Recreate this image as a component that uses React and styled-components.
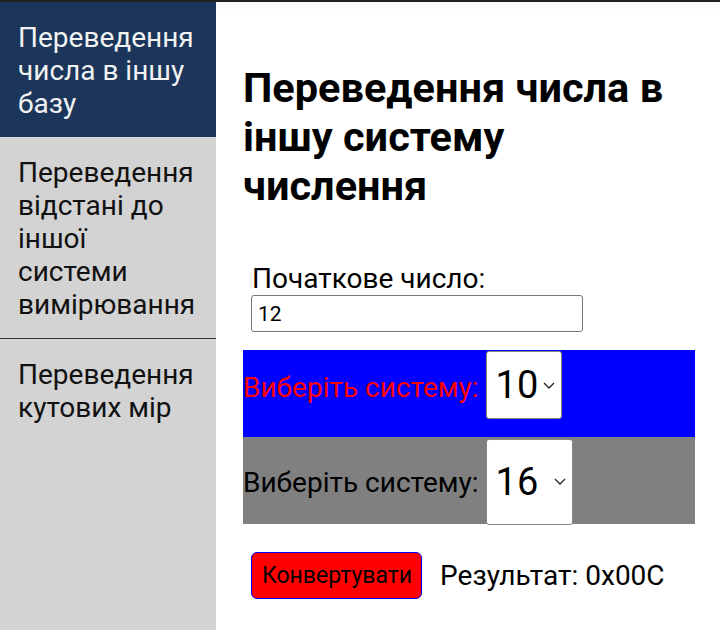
import React, { useState } from 'react';
import styled, { createGlobalStyle } from 'styled-components';

const GlobalStyle = createGlobalStyle`
    body {
        margin: 0;
        font-family: Roboto, "Liberation Sans", sans-serif;
        background: #fff;
    }
`;

// chevron for the selects
const chevron = encodeURIComponent(
    '<svg xmlns="http://www.w3.org/2000/svg" width="12" height="7" viewBox="0 0 12 7"><path d="M1 1l5 5 5-5" fill="none" stroke="#222" stroke-width="1.3"/></svg>'
);

const TopBar = styled.div`
    height: 2px;
    background-color: #222;
    box-shadow: 0 2px 8px rgba(0, 0, 0, 0.12);
`;

const Layout = styled.div`
    display: flex;
    min-height: calc(100vh - 2px);
`;

const Sidebar = styled.nav`
    width: 216px;
    flex-shrink: 0;
    background-color: #d3d3d3;
`;

const NavItem = styled.div`
    padding: 19px 18px 17px;
    font-size: 28px;
    line-height: 33px;
    color: ${(p) => (p.$active ? '#f2f2f2' : '#111')};
    background-color: ${(p) => (p.$active ? '#1b365a' : 'transparent')};
    border-bottom: ${(p) => (p.$divider ? '1px solid #333' : 'none')};
`;

const Main = styled.main`
    flex: 1;
    padding: 0 25px 0 27px;
`;

const Heading = styled.h1`
    max-width: 430px;
    margin: 61px 0 52px;
    font-size: 41.5px;
    line-height: 49px;
    font-weight: 700;
    color: #000;
`;

const Field = styled.div`
    display: flex;
    flex-direction: column;
    align-items: flex-start;
    padding-left: 8px;
    margin-bottom: 18px;
`;

const FieldLabel = styled.label`
    font-size: 28px;
    line-height: 33px;
    padding-left: 1px;
`;

const NumberInput = styled.input`
    width: 332px;
    height: 37px;
    box-sizing: border-box;
    border: 1px solid #777;
    border-radius: 3px;
    padding: 0 6px;
    font-family: inherit;
    font-size: 21px;
    color: #000;
`;

const SystemRow = styled.div`
    display: flex;
    align-items: center;
    height: 87px;
    background-color: ${(p) => p.$bg};
    color: ${(p) => p.$color};
`;

const RowLabel = styled.label`
    font-size: 28px;
    margin-right: 7px;
    margin-top: ${(p) => p.$shift || 0}px;
`;

const SystemSelect = styled.select`
    appearance: none;
    -webkit-appearance: none;
    height: ${(p) => p.$h}px;
    width: ${(p) => p.$w}px;
    align-self: ${(p) => p.$align || 'center'};
    margin-top: ${(p) => p.$top || 0}px;
    box-sizing: border-box;
    border: 1px solid #888;
    border-radius: 3px;
    background: #fff url("data:image/svg+xml,${chevron}") no-repeat right 6px center;
    font-family: inherit;
    font-size: 38px;
    color: #000;
    padding: 0 20px 0 9px;
`;

const Actions = styled.div`
    display: flex;
    align-items: center;
    gap: 18px;
    padding-left: 8px;
    margin-top: 28px;
`;

const ConvertButton = styled.button`
    height: 47px;
    padding: 0 9px 0 10px;
    background-color: #ff0000;
    border: 1px solid #0000ff;
    border-radius: 6px;
    font-family: inherit;
    font-size: 23px;
    color: #000;
    cursor: pointer;
`;

const Result = styled.span`
    font-size: 28px;
    color: #000;
`;

const bases = ['2', '8', '10', '16'];

const App = () => {
    const [value, setValue] = useState('12');
    const [from, setFrom] = useState('10');
    const [to, setTo] = useState('16');
    const [result, setResult] = useState('0x00C');

    const convert = () => {
        const n = parseInt(value, Number(from));
        if (isNaN(n)) {
            setResult('—');
            return;
        }
        const s = n.toString(Number(to)).toUpperCase();
        setResult(to === '16' ? '0x' + s.padStart(3, '0') : s);
    };

    return (
        <>
            <GlobalStyle />
            <TopBar />
            <Layout>
                <Sidebar>
                    <NavItem $active>Переведення числа в іншу базу</NavItem>
                    <NavItem $divider>Переведення відстані до іншої системи вимірювання</NavItem>
                    <NavItem>Переведення кутових мір</NavItem>
                </Sidebar>
                <Main>
                    <Heading>Переведення числа в іншу систему числення</Heading>
                    <Field>
                        <FieldLabel htmlFor="num">Початкове число:</FieldLabel>
                        <NumberInput id="num" value={value} onChange={(e) => setValue(e.target.value)} />
                    </Field>
                    <SystemRow $bg="#0000ff" $color="#ff0000">
                        <RowLabel $shift={-12}>Виберіть систему:</RowLabel>
                        <SystemSelect $w={76} $h={68} $align="flex-start" $top={1} value={from} onChange={(e) => setFrom(e.target.value)}>
                            {bases.map((b) => (
                                <option key={b} value={b}>{b}</option>
                            ))}
                        </SystemSelect>
                    </SystemRow>
                    <SystemRow $bg="#808080" $color="#000">
                        <RowLabel $shift={4}>Виберіть систему:</RowLabel>
                        <SystemSelect $w={87} $h={86} $top={2} value={to} onChange={(e) => setTo(e.target.value)}>
                            {bases.map((b) => (
                                <option key={b} value={b}>{b}</option>
                            ))}
                        </SystemSelect>
                    </SystemRow>
                    <Actions>
                        <ConvertButton onClick={convert}>Конвертувати</ConvertButton>
                        <Result>Результат: {result}</Result>
                    </Actions>
                </Main>
            </Layout>
        </>
    );
};

export default App;
